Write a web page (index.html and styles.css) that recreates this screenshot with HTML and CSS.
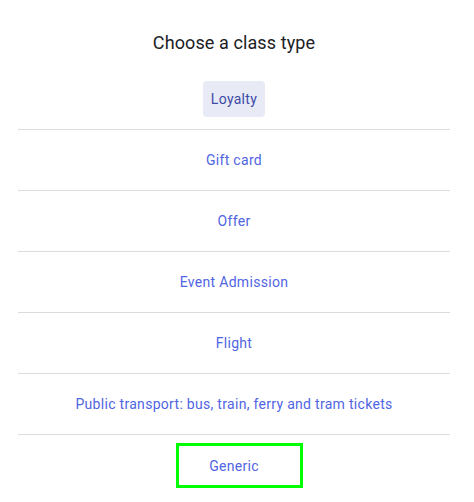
FILE: index.html
```html
<!DOCTYPE html>
<html lang="en">

<head>
    <meta charset="UTF-8">
    <meta name="viewport" content="width=device-width, initial-scale=1.0">
    <title>Choose a class type</title>
    <link rel="stylesheet" href="styles.css">
</head>

<body>
    <div class="dialogo">
        <h1 class="titulo">Choose a class type</h1>
        <ul class="lista">
            <li class="fila"><button class="opcion activa">Loyalty</button></li>
            <li class="fila"><button class="opcion">Gift card</button></li>
            <li class="fila"><button class="opcion">Offer</button></li>
            <li class="fila"><button class="opcion">Event Admission</button></li>
            <li class="fila"><button class="opcion">Flight</button></li>
            <li class="fila"><button class="opcion">Public transport: bus, train, ferry and tram tickets</button></li>
            <li class="fila"><button class="opcion foco">Generic</button></li>
        </ul>
    </div>
</body>

</html>
```

FILE: styles.css
```css
body {
    margin: 0;
    background: #ffffff;
    font-family: Roboto, "Noto Sans", sans-serif;
}

.dialogo {
    margin: 0 24px 0 18px;
}

.titulo {
    margin: 0;
    height: 69px;
    display: flex;
    align-items: center;
    justify-content: center;
    padding-top: 16px;
    box-sizing: border-box;
    font-size: 18px;
    font-weight: 400;
    letter-spacing: 0.1px;
    color: #202124;
}

.lista {
    list-style: none;
    margin: 0;
    padding: 0;
}

.fila {
    height: 60px;
    display: flex;
    align-items: center;
    justify-content: center;
    border-bottom: 1px solid #dadce0;
}

.fila:last-child {
    border-bottom: none;
}

.opcion {
    border: none;
    background: none;
    font-family: inherit;
    font-size: 14px;
    letter-spacing: 0.3px;
    color: #5065e3;
    padding: 0 8px;
    height: 36px;
    border-radius: 4px;
    cursor: pointer;
}

.activa {
    background: #e8eaf6;
    color: #3c4aa6;
}

.foco {
    box-sizing: border-box;
    width: 127px;
    height: 45px;
    margin: 1px 0 0 10px;
    padding: 0 14px 0 4px;
    border: 3px solid #00ff00;
    border-radius: 0;
}
```
